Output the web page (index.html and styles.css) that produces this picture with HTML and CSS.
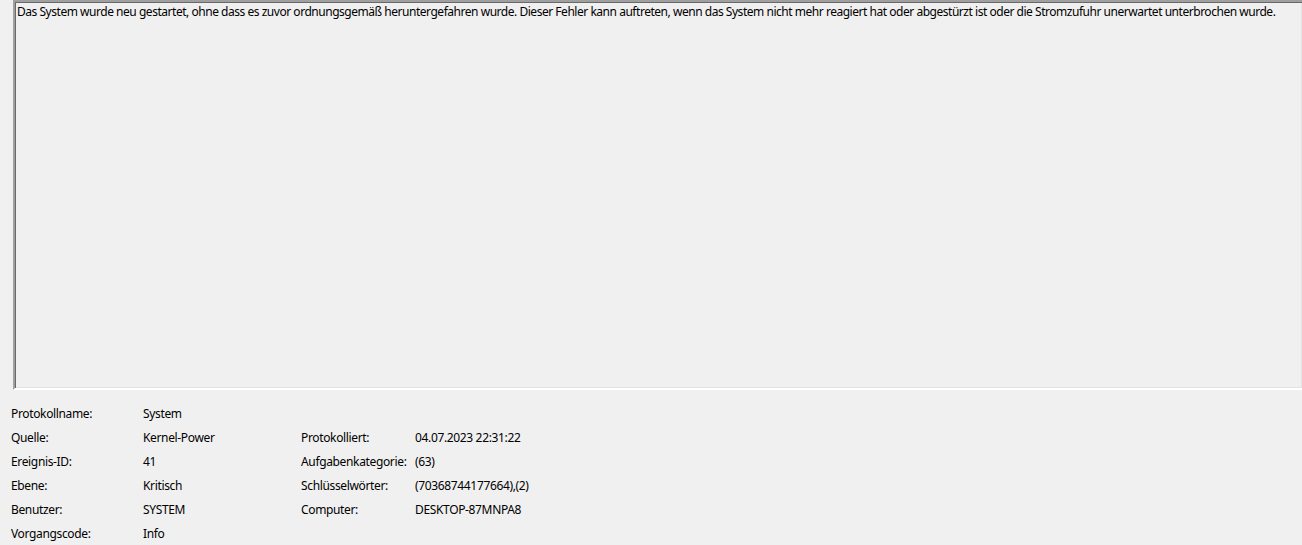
FILE: index.html
```html
<!DOCTYPE html>
<html lang="de">
<head>
<meta charset="utf-8">
<title>Ereignis 41, Kernel-Power</title>
<link rel="stylesheet" href="styles.css">
</head>
<body>
<div class="page">
  <div class="desc">Das System wurde neu gestartet, ohne dass es zuvor ordnungsgemäß heruntergefahren wurde. Dieser Fehler kann auftreten, wenn das System nicht mehr reagiert hat oder abgestürzt ist oder die Stromzufuhr unerwartet unterbrochen wurde.</div>
  <div class="details">
    <span class="cell">Protokollname:</span><span class="cell">System</span><span class="cell"></span><span class="cell"></span>
    <span class="cell">Quelle:</span><span class="cell">Kernel-Power</span><span class="cell">Protokolliert:</span><span class="cell">04.07.2023 22:31:22</span>
    <span class="cell">Ereignis-ID:</span><span class="cell">41</span><span class="cell">Aufgabenkategorie:</span><span class="cell">(63)</span>
    <span class="cell">Ebene:</span><span class="cell">Kritisch</span><span class="cell">Schlüsselwörter:</span><span class="cell">(70368744177664),(2)</span>
    <span class="cell">Benutzer:</span><span class="cell">SYSTEM</span><span class="cell">Computer:</span><span class="cell">DESKTOP-87MNPA8</span>
    <span class="cell">Vorgangscode:</span><span class="cell">Info</span><span class="cell"></span><span class="cell"></span>
  </div>
</div>
</body>
</html>
```
FILE: styles.css
```css
html, body {
  margin: 0;
  padding: 0;
  background: #f0f0f0;
  height: 100%;
  overflow: hidden;
}
.page {
  font-family: "Noto Sans", "Open Sans", sans-serif;
  font-size: 12px;
  color: #000;
  display: flex;
  flex-direction: column;
}
.desc {
  margin-left: 13px;
  width: 1283px;
  height: 386px;
  border-style: solid;
  border-width: 2px;
  border-color: #a0a0a0 #ffffff #ffffff #a0a0a0;
  box-shadow: inset 1px 1px 0 #696969, inset -1px -1px 0 #e3e3e3;
  padding: 0 2px;
  line-height: 20px;
  white-space: nowrap;
  letter-spacing: -0.47px;
}
.details {
  display: grid;
  grid-template-columns: 132px 158px 114px auto;
  grid-auto-rows: 24px;
  padding-left: 11px;
  padding-top: 12px;
  line-height: 24px;
  letter-spacing: -0.35px;
}
.cell {
  white-space: nowrap;
}
```
